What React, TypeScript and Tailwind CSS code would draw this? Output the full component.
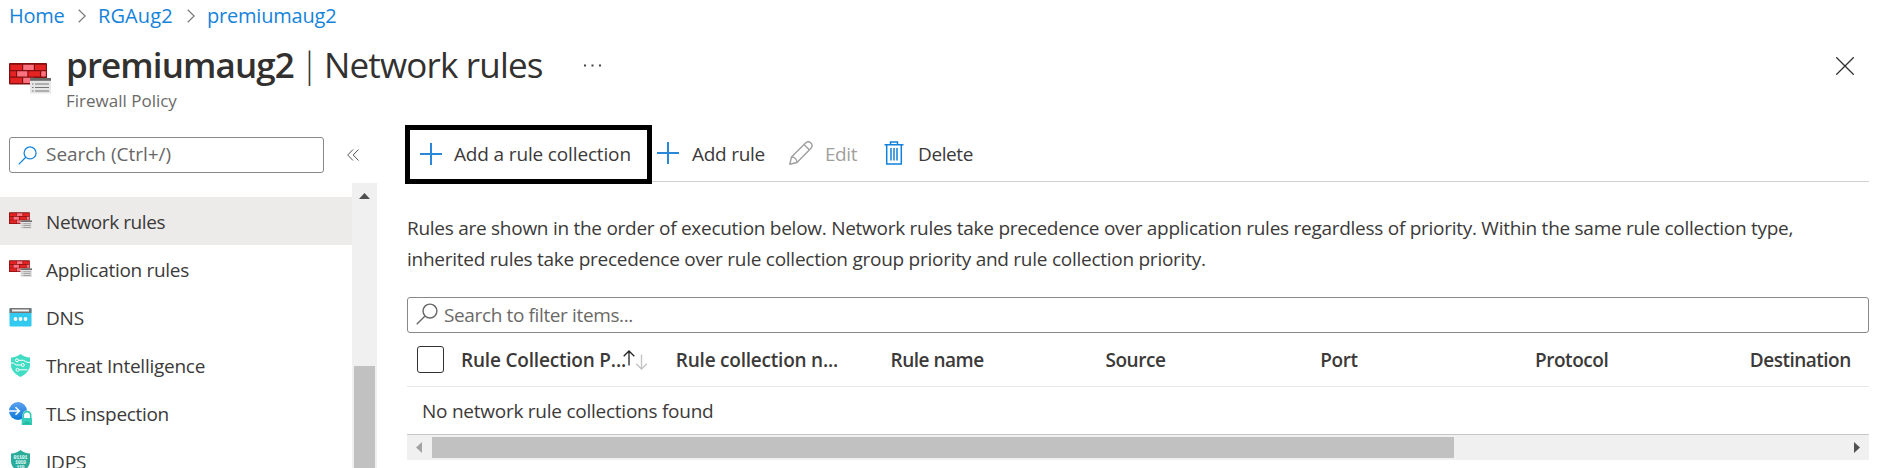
import React from 'react';

type IconProps = { className?: string };

function FirewallIcon({ className }: IconProps) {
  return (
    <svg className={className} viewBox="0 0 42 32" fill="none">
      <rect x="0" y="0" width="38" height="21.500" rx="1" fill="#821010" />
      <path d="M1.300 1.800H13V7H1.300zM26 1.800h10.800V7H26zM1.300 8.200H7V13.500H1.300zM19.500 8.200H31V13.500H19.500zM1.300 14.700H13V20H1.300z" fill="#e62323" />
      <path d="M14.200 1.800H24.800V7H14.200zM8.200 8.200H18.300V13.500H8.200zM32.200 8.200H36.800V13.500H32.200zM14.200 14.700H24.800V20H14.200z" fill="#ff7381" />
      <rect x="21" y="15" width="21" height="15.500" fill="#e6e6e6" />
      <rect x="21" y="15" width="21" height="2.800" fill="#6b6b6b" />
      <path d="M23 21h1.500M23 24.500h1.500M23 28h1.500M26 21h14M26 24.500h14M26 28h14" stroke="#767676" strokeWidth="1.200" />
    </svg>
  );
}

function DnsIcon() {
  return (
    <svg className="h-[23px] w-[23px]" viewBox="0 0 23 23">
      <rect x="0.500" y="2" width="22" height="18.500" rx="1" fill="#32caf0" />
      <path d="M.5 3a1 1 0 0 1 1-1h20a1 1 0 0 1 1 1v4H.5z" fill="#767676" />
      <rect x="3" y="3.500" width="17" height="2" fill="#f2f2f2" />
      <g fill="#fff">
        <circle cx="6.500" cy="13" r="1.900" />
        <circle cx="11.500" cy="13" r="1.900" />
        <circle cx="16.500" cy="13" r="1.900" />
      </g>
    </svg>
  );
}

function ThreatIcon() {
  return (
    <svg className="h-[23px] w-[23px]" viewBox="0 0 23 23" fill="none">
      <path d="M2 3.500C6 3.300 8.500 2.200 11.500 0c3 2.200 5.500 3.300 9.500 3.500V11c0 6-5 9.500-9.500 12C7 20.500 2 17 2 11z" fill="#40dcc4" />
      <g stroke="#fff" strokeWidth="1">
        <circle cx="8" cy="6.300" r="1.500" />
        <path d="M9.500 6.300h5l3.500 2h3" />
        <circle cx="13.800" cy="11" r="1.500" />
        <path d="M12.300 11H7L4.500 9H2" />
        <circle cx="8.500" cy="15.800" r="1.500" />
        <path d="M10 15.800h8.500" />
      </g>
    </svg>
  );
}

function TlsIcon() {
  return (
    <svg className="h-[23px] w-[23px]" viewBox="0 0 23 23" fill="none">
      <defs>
        <linearGradient id="tls" x1="0" y1="0" x2="0" y2="1">
          <stop stopColor="#5ea0ef" />
          <stop offset="1" stopColor="#0a78d8" />
        </linearGradient>
      </defs>
      <circle cx="9" cy="9" r="9" fill="url(#tls)" />
      <path d="M0 9h10M6.500 5.300 10.300 9l-3.800 3.700" stroke="#fff" strokeWidth="1.600" />
      <path d="M13.500 16V13a4.500 4.500 0 0 1 9 0v3z" fill="#fff" />
      <path d="M14.300 16.500V13.300a3.700 3.700 0 0 1 7.400 0v3.200" stroke="#31c9b2" strokeWidth="1.600" />
      <rect x="12.700" y="16" width="10.300" height="7" rx=".6" fill="#34cfb8" />
      <path d="m13 22.500 5-3.500 5 3.500z" fill="#25b9a3" />
    </svg>
  );
}

function IdpsIcon() {
  return (
    <svg className="h-[23px] w-[23px]" viewBox="0 0 23 23">
      <path d="M2 3.500C6 3.300 8.500 2.200 11.500 0c3 2.200 5.500 3.300 9.500 3.500V11c0 6-5 9.500-9.500 12C7 20.500 2 17 2 11z" fill="#2bab99" />
      <g fill="#e8fffb" fontFamily="Liberation Mono, monospace" fontSize="5" fontWeight="700" textAnchor="middle">
        <text x="11.500" y="8.500" textLength="14">01101</text>
        <text x="11.500" y="13.500" textLength="11">1010</text>
        <text x="11.500" y="18.500" textLength="8">110</text>
      </g>
    </svg>
  );
}

function SearchIcon({ className }: IconProps) {
  return (
    <svg className={className} viewBox="0 0 20 20" fill="none" stroke="currentColor" strokeWidth="1.300">
      <circle cx="12.700" cy="7.300" r="6.300" />
      <path d="M8.200 11.800.7 19.300" />
    </svg>
  );
}

function PlusIcon() {
  return (
    <svg className="h-[22px] w-[22px] shrink-0" viewBox="0 0 22 22" stroke="#2b88d8" strokeWidth="2">
      <path d="M11 0v22M0 11h22" />
    </svg>
  );
}

function PencilIcon() {
  return (
    <svg className="h-6 w-6 shrink-0" viewBox="0 0 24 24" fill="none" stroke="#a19f9d" strokeWidth="1.400" strokeLinejoin="round">
      <path d="M.8 23.200 2.500 16 16.500 2c4-3.500 8.500 1.500 5.500 5.300L8 21.500z" />
      <path d="M2.500 16c3 0 5.500 2.500 5.500 5.500M15 3.500l5.500 5.500" />
    </svg>
  );
}

function TrashIcon() {
  return (
    <svg className="h-6 w-5 shrink-0" viewBox="0 0 20 24" fill="none" stroke="#1081dc" strokeWidth="1.500">
      <path d="M.5 3.800h19M6.500 3.500V1h7v2.500M2.700 4v19h14.600V4" />
      <path d="M7 7v12.500M10 7v12.500M13 7v12.500" />
    </svg>
  );
}

function Chevron() {
  return (
    <svg className="mt-[1px] h-[14px] w-2" viewBox="0 0 8 14" fill="none" stroke="#777" strokeWidth="1.200">
      <path d="m.7.700 6.500 6.300L.7 13.300" />
    </svg>
  );
}

function SortArrows() {
  return (
    <svg className="absolute top-[5px] left-[162px] h-5 w-[25px]" viewBox="0 0 25 20" fill="none" strokeWidth="1.300">
      <path d="M6 15.500V1M.7 6.300 6 1l5.300 5.300" stroke="#222" />
      <path d="M18.500 4.500V19M13.200 13.700l5.300 5.300 5.300-5.300" stroke="#c2c2c2" />
    </svg>
  );
}

const navItems = [
  { label: 'Network rules', icon: <FirewallIcon className="h-[18px] w-[23px]" />, tracking: 'tracking-[-0.42px]', active: true },
  { label: 'Application rules', icon: <FirewallIcon className="h-[18px] w-[23px]" />, tracking: 'tracking-[-0.3px]' },
  { label: 'DNS', icon: <DnsIcon />, tracking: 'tracking-[-0.17px]' },
  { label: 'Threat Intelligence', icon: <ThreatIcon />, tracking: 'tracking-[-0.26px]' },
  { label: 'TLS inspection', icon: <TlsIcon />, tracking: 'tracking-[-0.31px]' },
  { label: 'IDPS', icon: <IdpsIcon />, tracking: 'tracking-[-0.2px]' },
];

const columns = [
  { label: 'Rule Collection P...', tracking: 'tracking-[-0.19px]', sorted: true },
  { label: 'Rule collection n...', tracking: 'tracking-[-0.22px]' },
  { label: 'Rule name', tracking: 'tracking-[-0.5px]' },
  { label: 'Source', tracking: 'tracking-[-0.45px]' },
  { label: 'Port', tracking: 'tracking-[-0.4px]' },
  { label: 'Protocol', tracking: 'tracking-[-0.45px]' },
  { label: 'Destination', tracking: 'tracking-[-0.5px]' },
];

function Sidebar() {
  return (
    <aside className="w-[377px] shrink-0">
      <div className="flex h-[60px] items-start pt-[14px] pl-[9px]">
        <div className="flex h-9 w-[315px] items-center rounded-[3px] border border-[#8a8886] pl-2 text-[#666]">
          <SearchIcon className="h-[19px] w-[19px] text-[#1283dc]" />
          <span className="-mt-px ml-[9px] tracking-[-0.03px]">Search (Ctrl+/)</span>
        </div>
        <svg className="mt-3 ml-[23px] h-3 w-3" viewBox="0 0 12 12" fill="none" stroke="#555" strokeWidth="1">
          <path d="M6 .5.7 6 6 11.500M11.500.5 6.200 6l5.300 5.500" />
        </svg>
      </div>
      <div className="flex h-[285px] overflow-hidden">
        <nav className="w-[352px] pt-[14px]">
          {navItems.map((item) => (
            <div key={item.label} className={`flex h-12 items-center pl-[9px] ${item.active ? 'bg-[#edebe9]' : ''}`}>
              {item.icon}
              <span className={`mt-[2px] ml-[14px] ${item.tracking}`}>{item.label}</span>
            </div>
          ))}
        </nav>
        <div className="flex w-[25px] flex-col items-center bg-[#f0f0f0]">
          <svg className="mt-[10px] h-[6px] w-[11px] shrink-0" viewBox="0 0 11 6">
            <path d="M0 6 5.500 0 11 6z" fill="#505050" />
          </svg>
          <div className="mt-[167px] w-[21px] flex-1 bg-[#c1c1c1]" />
        </div>
      </div>
    </aside>
  );
}

function Toolbar() {
  return (
    <div className="flex h-[59px]">
      <div className="-ml-[2px] flex h-[59px] w-[247px] shrink-0 items-center border-5 border-black pb-[2px] pl-[10px]">
        <PlusIcon />
        <span className="mt-[2px] ml-3 tracking-[-0.15px]">Add a rule collection</span>
      </div>
      <div className="flex h-[57px] flex-1 items-center border-b border-[#d2d0ce] pl-[5px]">
        <PlusIcon />
        <span className="mt-[2px] ml-[13px] w-[97px] tracking-[-0.26px]">Add rule</span>
        <PencilIcon />
        <span className="mt-[2px] ml-3 w-[59px] tracking-[-0.44px] text-[#a19f9d]">Edit</span>
        <TrashIcon />
        <span className="mt-[2px] ml-[14px] tracking-[-0.4px]">Delete</span>
      </div>
    </div>
  );
}

function RulesTable() {
  return (
    <section>
      <div className="flex h-[54px] items-center border-b border-[#e8e8e8] pl-[10px]">
        <div className="h-[27px] w-[27px] shrink-0 rounded-[3px] border border-[#323130]" />
        <div className="mt-px ml-[17px] flex font-semibold">
          {columns.map((c) => (
            <div key={c.label} className="relative w-[214.8px] shrink-0 last:w-[110px]">
              <span className={c.tracking}>{c.label}</span>
              {c.sorted && <SortArrows />}
            </div>
          ))}
        </div>
      </div>
      <div className="flex h-[48px] items-center border-b border-[#c8c6c4] pt-px pl-[15px] tracking-[-0.25px]">
        No network rule collections found
      </div>
      <div className="flex h-[25px] items-center bg-[#f0f0f0] pl-[9px]">
        <svg className="h-[11px] w-[6px]" viewBox="0 0 6 11">
          <path d="M6 0 0 5.500 6 11z" fill="#a3a3a3" />
        </svg>
        <div className="ml-[10px] h-[21px] w-[1022px] bg-[#c1c1c1]" />
        <svg className="mr-[9px] ml-auto h-[11px] w-[6px]" viewBox="0 0 6 11">
          <path d="M0 0 6 5.500 0 11z" fill="#505050" />
        </svg>
      </div>
    </section>
  );
}

export default function App() {
  return (
    <div className="flex h-[468px] w-[1883px] flex-col overflow-hidden bg-white font-['Open_Sans','Noto_Sans',sans-serif] text-[19px] leading-[31px] whitespace-nowrap text-[#3b3a39]">
      <nav className="flex h-8 items-center pb-[2px] pl-[9px] text-[20px] text-[#1583da]">
        <span className="w-[69px] tracking-[-0.3px]">Home</span>
        <Chevron />
        <span className="ml-3 w-[89px] tracking-[0.1px]">RGAug2</span>
        <Chevron />
        <span className="ml-[12px] tracking-[-0.2px]">premiumaug2</span>
      </nav>
      <header className="flex h-[91px] pl-[9px]">
        <FirewallIcon className="mt-[31px] h-8 w-[42px]" />
        <div className="ml-[15px] pt-[9px]">
          <h1 className="flex h-12 items-center text-[35px] leading-[48px] text-[#323130]">
            <span className="w-[237px] font-semibold tracking-[-0.9px]">premiumaug2</span>
            <span className="mr-[5px] ml-[-3px] font-light">|</span>
            <span className="tracking-[-0.82px]">Network rules</span>
          </h1>
          <p className="-mt-[2px] h-7 text-[17px] leading-7 text-[#6b6967]">Firewall Policy</p>
        </div>
        <svg className="mt-[32px] ml-[41px] h-[3px] w-[18px]" viewBox="0 0 18 3" fill="#444">
          <path d="M0 .5h2v2H0zM7.500.5h2v2h-2zM15 .5h2v2h-2z" />
        </svg>
        <svg className="mt-[25px] mr-[29px] ml-auto h-[18px] w-[18px]" viewBox="0 0 18 18" stroke="#323130" strokeWidth="1.300">
          <path d="m.3.300 17.400 17.400M17.700.3.300 17.700" />
        </svg>
      </header>
      <div className="flex">
        <Sidebar />
        <main className="ml-[30px] w-[1462px] pt-[2px]">
          <Toolbar />
          <p className="mt-[29px] h-[62px]">
            <span className="block tracking-[-0.27px]">
              Rules are shown in the order of execution below. Network rules take precedence over application rules regardless of priority. Within the same rule collection type,
            </span>
            <span className="block tracking-[-0.26px]">
              inherited rules take precedence over rule collection group priority and rule collection priority.
            </span>
          </p>
          <div className="mt-[22px] flex h-9 items-center rounded-[3px] border border-[#8a8886] pl-2 text-[#6b6967]">
            <SearchIcon className="-mt-[3px] h-[22px] w-[22px]" />
            <span className="ml-[6px] tracking-[-0.37px]">Search to filter items...</span>
          </div>
          <RulesTable />
        </main>
      </div>
    </div>
  );
}
